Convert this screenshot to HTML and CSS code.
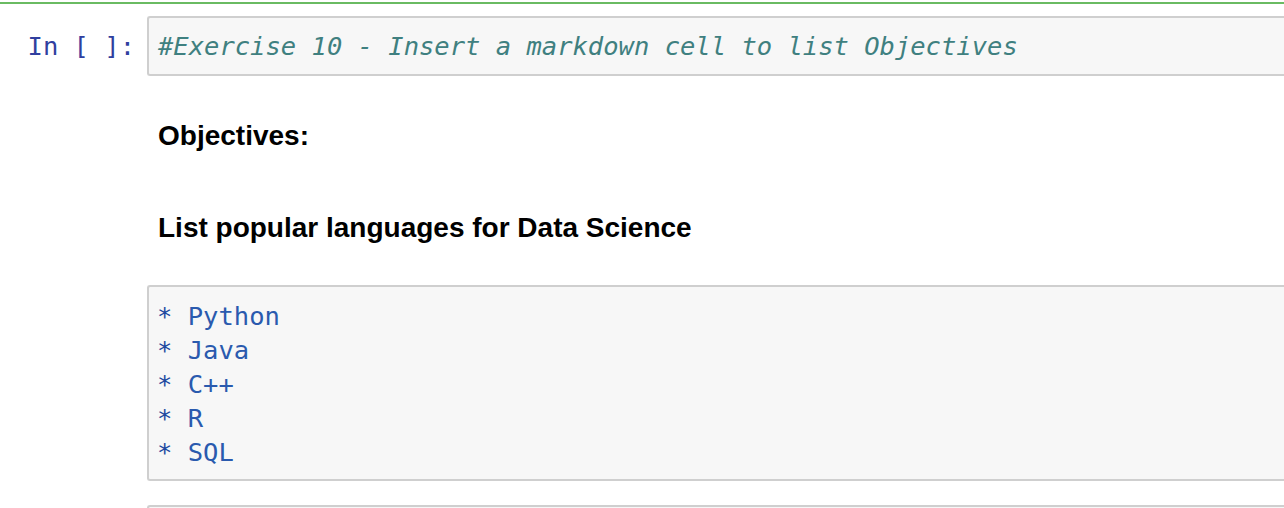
FILE: index.html
```html
<!DOCTYPE html>
<html>
<head>
<meta charset="utf-8">
<link rel="stylesheet" href="styles.css">
</head>
<body>
<div class="topline"></div>
<div class="cell code-cell">
  <div class="prompt">In [ ]:</div>
  <div class="editor"><div class="line"><span class="comment">#Exercise 10 - Insert a markdown cell to list Objectives</span></div></div>
</div>
<div class="cell md-cell">
  <div class="prompt"></div>
  <div class="rendered">
    <h4 class="heading first">Objectives:</h4>
    <h4 class="heading second">List popular languages for Data Science</h4>
  </div>
</div>
<div class="cell list-cell">
  <div class="prompt"></div>
  <div class="editor list-editor">
    <div class="line"><span class="star">*</span> <span class="item">Python</span></div>
    <div class="line"><span class="star">*</span> <span class="item">Java</span></div>
    <div class="line"><span class="star">*</span> <span class="item">C++</span></div>
    <div class="line"><span class="star">*</span> <span class="item">R</span></div>
    <div class="line"><span class="star">*</span> <span class="item">SQL</span></div>
  </div>
</div>
<div class="cell next-cell">
  <div class="prompt"></div>
  <div class="editor next-editor"></div>
</div>
</body>
</html>
```
FILE: styles.css
```css
html, body {
  margin: 0;
  padding: 0;
  background: #ffffff;
  overflow: hidden;
}
body {
  width: 1284px;
  height: 508px;
}
.topline {
  margin-top: 2px;
  height: 2px;
  background: #6abb62;
}
.cell {
  display: flex;
  align-items: flex-start;
}
.prompt {
  flex: 0 0 147px;
  box-sizing: border-box;
  padding-right: 12px;
  text-align: right;
  font-family: "DejaVu Sans Mono", monospace;
  font-size: 25.5px;
  line-height: 34px;
  color: #303f9f;
  white-space: pre;
}
.code-cell {
  margin-top: 12px;
}
.code-cell .prompt {
  padding-top: 13px;
}
.editor {
  flex: 1 1 auto;
  box-sizing: border-box;
  background: #f7f7f7;
  border: 2px solid #cfcfcf;
  border-right: none;
  border-radius: 3px 0 0 3px;
  padding: 11px 0 11px 9px;
  font-family: "DejaVu Sans Mono", monospace;
  font-size: 25.5px;
  line-height: 34px;
}
.line {
  white-space: pre;
  height: 34px;
}
.comment {
  color: #3f8080;
  font-style: italic;
}
.rendered {
  flex: 1 1 auto;
  padding-left: 11px;
  font-family: "Liberation Sans", Arial, sans-serif;
  color: #000;
}
.heading {
  margin: 0;
  font-size: 28px;
  font-weight: bold;
  line-height: 33px;
}
.first {
  margin-top: 43px;
}
.second {
  margin-top: 59px;
}
.list-cell {
  margin-top: 41px;
}
.list-editor {
  padding-top: 12px;
  padding-bottom: 10px;
  padding-left: 8px;
}
.star {
  color: #2048a0;
}
.item {
  color: #2a5aae;
}
.next-cell {
  margin-top: 24px;
}
.next-editor {
  height: 40px;
}
```
